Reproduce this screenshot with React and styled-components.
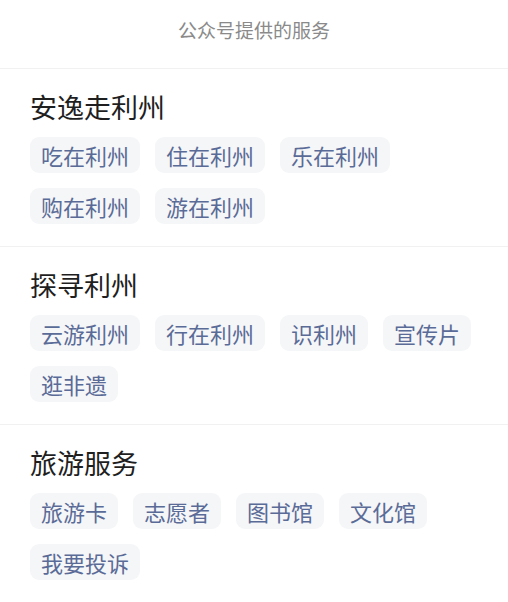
import styled, { createGlobalStyle } from "styled-components";

const GlobalStyle = createGlobalStyle`
  html, body {
    margin: 0;
    padding: 0;
    background: #ffffff;
  }
  body {
    font-family: "Noto Sans CJK SC", "Noto Sans", sans-serif;
  }
`;

const Page = styled.div`
  width: 508px;
  min-height: 602px;
  background: #ffffff;
`;

const Header = styled.header`
  box-sizing: border-box;
  height: 69px;
  padding-top: 18px;
  border-bottom: 1px solid #f1f1f1;
  text-align: center;
  font-size: 19px;
  line-height: 24px;
  color: #8a8a8a;
`;

const Section = styled.section`
  padding: 20px 30px 22px;
  border-bottom: ${(props) => (props.last ? "none" : "1px solid #f1f1f1")};
`;

const Title = styled.h2`
  margin: 0 0 12px;
  font-size: 27px;
  line-height: 36px;
  font-weight: 400;
  color: #1f1f1f;
`;

const TagList = styled.div`
  display: flex;
  flex-wrap: wrap;
  column-gap: 15px;
  row-gap: 15px;
`;

const Tag = styled.span`
  display: inline-block;
  height: 36px;
  padding: 0 11px;
  border-radius: 9px;
  background: #f5f6f8;
  font-size: 22px;
  line-height: 36px;
  color: #5a6b97;
  white-space: nowrap;
`;

const sections = [
  { title: "安逸走利州", tags: ["吃在利州", "住在利州", "乐在利州", "购在利州", "游在利州"] },
  { title: "探寻利州", tags: ["云游利州", "行在利州", "识利州", "宣传片", "逛非遗"] },
  { title: "旅游服务", tags: ["旅游卡", "志愿者", "图书馆", "文化馆", "我要投诉"] },
];

export default function App() {
  return (
    <Page>
      <GlobalStyle />
      <Header>公众号提供的服务</Header>
      {sections.map((s, i) => (
        <Section key={s.title} last={i === sections.length - 1}>
          <Title>{s.title}</Title>
          <TagList>
            {s.tags.map((t) => (
              <Tag key={t}>{t}</Tag>
            ))}
          </TagList>
        </Section>
      ))}
    </Page>
  );
}
